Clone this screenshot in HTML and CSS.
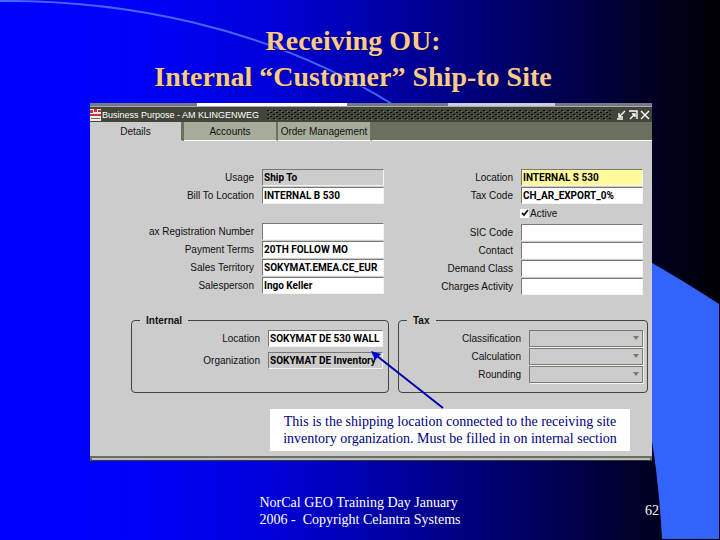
FILE: index.html
```html
<!DOCTYPE html>
<html lang="en">
<head>
<meta charset="utf-8">
<title>Receiving OU</title>
<link rel="stylesheet" href="styles.css">
</head>
<body>
<main class="slide">
  <svg class="backdrop" viewBox="0 0 720 540" preserveAspectRatio="none" aria-hidden="true">
    <path class="wedge" d="M640 256 Q684 281 719 304 V539 H662 Q659 483 651 435 Z"/>
    <path class="arc" d="M0 1 C120 0 265 25 392 104"/>
  </svg>
  <h1 class="title">Receiving OU:<br>Internal “Customer” Ship-to Site</h1>

  <section class="window" aria-label="Business Purpose">
    <div class="behind"><span class="behind-field"></span><span class="behind-field pale"></span></div>
    <header class="titlebar">
      <svg class="logo" viewBox="0 0 11 12" aria-hidden="true"><path fill="#eee" d="M0 0h11v12H0z"/><path fill="#c33" d="M0 1h3v3H0zM4 0h3v3H4zM8 1h3v2H8zM0 5h11v2H0z"/><path fill="#766" d="M1 9h9v1H1z"/></svg>
      <h2 class="caption">Business Purpose - AM KLINGENWEG</h2>
      <span class="grip"></span>
      <button class="tool" aria-label="Minimize"><svg viewBox="0 0 10 10"><path d="M9 1 4 6M3 3v4h4M1 9h6"/></svg></button>
      <button class="tool" aria-label="Maximize"><svg viewBox="0 0 10 10"><path d="M1 1h8v8M2 9l5-5M4 4h3v3"/></svg></button>
      <button class="tool" aria-label="Close"><svg viewBox="0 0 10 10"><path d="m1 1 8 8M9 1 1 9"/></svg></button>
    </header>
    <nav class="tabs">
      <button class="tab active">Details</button>
      <button class="tab">Accounts</button>
      <button class="tab">Order Management</button>
      <span class="tab-rest"></span>
    </nav>
    <form class="form">
      <div class="column left">
        <div class="row"><label for="usage">Usage</label><input id="usage" class="readonly" value="Ship To" readonly></div>
        <div class="row"><label for="bill">Bill To Location</label><input id="bill" value="INTERNAL B 530"></div>
        <div class="row gap"><label for="reg">ax Registration Number</label><input id="reg"></div>
        <div class="row"><label for="terms">Payment Terms</label><input id="terms" value="20TH FOLLOW MO"></div>
        <div class="row"><label for="terr">Sales Territory</label><input id="terr" value="SOKYMAT.EMEA.CE_EUR"></div>
        <div class="row"><label for="person">Salesperson</label><input id="person" value="Ingo Keller"></div>
      </div>
      <div class="column right">
        <div class="row"><label for="loc">Location</label><input id="loc" class="required" value="INTERNAL S 530"></div>
        <div class="row"><label for="tax">Tax Code</label><input id="tax" value="CH_AR_EXPORT_0%"></div>
        <div class="check-row"><input type="checkbox" id="active" checked><label for="active">Active</label></div>
        <div class="row"><label for="sic">SIC Code</label><input id="sic"></div>
        <div class="row"><label for="contact">Contact</label><input id="contact"></div>
        <div class="row"><label for="demand">Demand Class</label><input id="demand"></div>
        <div class="row"><label for="charges">Charges Activity</label><input id="charges"></div>
      </div>
      <fieldset class="group internal">
        <legend>Internal</legend>
        <div class="row"><label for="iloc">Location</label><input id="iloc" value="SOKYMAT DE 530 WALL"></div>
        <div class="row org"><label for="org">Organization</label><input id="org" class="readonly" value="SOKYMAT DE Inventory" readonly></div>
      </fieldset>
      <fieldset class="group taxes">
        <legend>Tax</legend>
        <div class="row"><label for="class">Classification</label><select id="class"><option></option></select></div>
        <div class="row"><label for="calc">Calculation</label><select id="calc"><option></option></select></div>
        <div class="row"><label for="round">Rounding</label><select id="round"><option></option></select></div>
      </fieldset>
    </form>
    <aside class="note">
      <svg class="arrow" viewBox="0 0 74 58" aria-hidden="true"><path d="M6 5 72 57" stroke="#0000a8" stroke-width="2"/><path d="m0 0 10 3-6 6z" fill="#0000d0"/></svg>
      <p>This is the shipping location connected to the receiving site<br>inventory organization. Must be filled in on internal section</p>
    </aside>
    <div class="bottom-edge"></div>
  </section>

  <footer class="footer">
    <p class="credit">NorCal GEO Training Day January<br>2006 - &nbsp;Copyright Celantra Systems</p>
    <span class="number">62</span>
  </footer>
</main>
</body>
</html>
```

FILE: styles.css
```css
* { box-sizing: border-box; }
body { margin: 0; font-family: "Liberation Sans", Arial, sans-serif; }
.slide {
  position: relative;
  min-height: 100vh;
  overflow: hidden;
  display: flex;
  flex-direction: column;
  background: linear-gradient(90deg, #0000ff 0%, #0000fa 20%, #0000d8 38%, #0000a0 55%, #000054 77%, #00001c 92%, #000005 100%);
}
.backdrop { position: absolute; inset: 0; width: 100%; height: 100%; }
.wedge { fill: #3264fc; }
.arc { fill: none; stroke: #4664ff; stroke-width: 2; }
.title {
  position: relative;
  margin: 23px 14px 8px 0;
  text-align: center;
  font: bold 28px/36px "Liberation Serif", "Times New Roman", serif;
  color: #fcca8c;
  text-shadow: 1px 1px 1px #000060;
}
.window {
  position: relative;
  display: flex;
  flex-direction: column;
  margin: 0 68px 0 90px;
  background: #ccc;
  color: #111;
  font-size: 10px;
}
.behind { display: flex; height: 3px; padding-left: 107px; gap: 101px; background: #76788a; }
.behind-field { width: 150px; background: #fff; }
.behind-field.pale { width: 107px; background: #ccd; }
.titlebar {
  display: flex;
  align-items: center;
  height: 16px;
  padding-right: 1px;
  border-top: 1px solid #aaa;
  background: #424539;
  color: #fff;
}
.logo { width: 11px; height: 12px; flex: none; }
.caption { margin: 0 0 0 1px; font: 9px/14px "Liberation Sans", Arial, sans-serif; }
.grip {
  flex: 1;
  height: 10px;
  margin: 0 4px 0 8px;
  background:
    conic-gradient(from 0deg at 2px 1px, transparent 75%, #0a0b06 0) 0 0 / 6px 4px,
    conic-gradient(from 0deg at 2px 1px, transparent 75%, #0a0b06 0) 3px 2px / 6px 4px,
    conic-gradient(from 0deg at 1px 1px, transparent 75%, #777a6e 0) 2px 1px / 6px 4px;
}
.tool { width: 12px; height: 12px; padding: 1px; border: 0; background: none; }
.tool svg { display: block; width: 10px; height: 10px; fill: none; stroke: #fff; stroke-width: 1.4; }
.tabs { display: flex; height: 19px; background: #6a705e; }
.tab {
  flex: none;
  width: 94px;
  padding: 0;
  border: 0;
  border-right: 2px solid #6a705e;
  border-bottom: 1px solid #fff;
  background: #a5ad9a;
  color: #111;
  font: 10px/17px "Liberation Sans", Arial, sans-serif;
  white-space: nowrap;
}
.tab.active { border-right-width: 3px; border-bottom-color: #ccc; background: #ccc; }
.tab-rest { flex: 1; border-bottom: 1px solid #fff; }
.form {
  display: grid;
  grid-template-columns: 294px 1fr;
  padding: 27px 4px 0 0;
}
.column { display: flex; flex-direction: column; }
.column.right { padding-right: 5px; }
.row { display: flex; align-items: center; justify-content: flex-end; gap: 8px; height: 18px; }
.row.gap { margin-top: 18px; }
.row input, .row select {
  width: 122px;
  height: 17px;
  padding: 0 1px;
  border: 1px solid #777a6e;
  border-right-color: #f4f4f4;
  border-bottom-color: #f4f4f4;
  border-radius: 0;
  background: #fff;
  color: #000;
  font: bold 10px/15px Roboto, "Liberation Sans", sans-serif;
}
.row input.readonly { background: #ccc; }
.row input.required { background: #fffa9a; }
.check-row { display: flex; align-items: center; height: 19px; padding-left: 136px; gap: 1px; }
.check-row input {
  appearance: none;
  width: 9px;
  height: 9px;
  margin: 0;
  background: #fff url("data:image/svg+xml,%3Csvg xmlns='http://www.w3.org/2000/svg' viewBox='0 0 9 9'%3E%3Cpath d='M2 4l2 2 4-5' fill='none' stroke='%23222' stroke-width='2'/%3E%3C/svg%3E");
}
.group {
  min-width: 0;
  margin: 19px 0 0;
  padding: 2px 5px 0;
  height: 79px;
  border: 1px solid #444;
  border-radius: 4px;
}
.group legend { margin-left: 3px; padding: 0 6px; font-weight: bold; line-height: 13px; }
.internal { margin-left: 41px; margin-right: -5px; }
.taxes { margin-left: 14px; padding-right: 4px; }
.internal .row input { width: 115px; }
.row.org { margin-top: 4px; }
.row select {
  width: 114px;
  appearance: none;
  border: 1px solid #777a6e;
  background: #ccc url("data:image/svg+xml,%3Csvg xmlns='http://www.w3.org/2000/svg' viewBox='0 0 6 4'%3E%3Cpath d='M0 0h6L3 4z' fill='%23777a6e'/%3E%3C/svg%3E") right 3px center / 6px 4px no-repeat;
  box-shadow: 1px 1px #f4f4f4;
}
.note {
  position: relative;
  margin: 16px 22px 5px 180px;
  padding: 4px 0;
  background: #fff;
  color: #000080;
  text-align: center;
  font: 14px/17px "Liberation Serif", "Times New Roman", serif;
}
.note p { margin: 0; white-space: nowrap; }
.arrow { position: absolute; left: 101px; bottom: 100%; width: 74px; height: 58px; }
.bottom-edge { height: 5px; border: 2px solid #6a705e; border-bottom: 1px solid #333; background: #bbb; }
.footer { position: relative; margin-top: 33px; color: #fff; font: 14px/17px "Liberation Serif", "Times New Roman", serif; }
.credit { width: max-content; margin: 0 auto; }
.number { position: absolute; right: 61px; top: 8px; }
```
